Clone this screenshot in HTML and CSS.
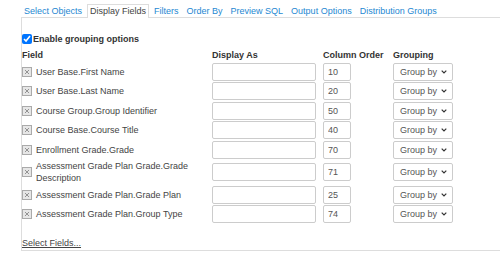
FILE: index.html
```html
<!DOCTYPE html>
<html>
  <head>
    <title>Display Fields</title>
    <link rel="stylesheet" href="styles.css">
  </head>
  <body>
    <div class="tabs">
      <a class="tab">Select Objects</a>
      <a class="tab active">Display Fields</a>
      <a class="tab">Filters</a>
      <a class="tab">Order By</a>
      <a class="tab">Preview SQL</a>
      <a class="tab">Output Options</a>
      <a class="tab">Distribution Groups</a>
    </div>

    <div class="panel">
      <label class="grouping-toggle">
        <input type="checkbox" checked />Enable grouping options
      </label>

      <div class="fields">
        <div class="th">Field</div>
        <div class="th">Display As</div>
        <div class="th">Column Order</div>
        <div class="th">Grouping</div>

        <div class="field"><svg class="remove" viewBox="0 0 10 10"><rect x="0.5" y="0.5" width="9" height="9" /><path d="M3 3l4 4M7 3l-4 4" /></svg><span>User Base.First Name</span></div>
        <input class="alias" type="text" />
        <input class="order" type="text" value="10" />
        <div class="select"><span>Group by</span><svg viewBox="0 0 6 4"><path d="M0.7 0.7l2.3 2.3 2.3-2.3" /></svg></div>

        <div class="field"><svg class="remove" viewBox="0 0 10 10"><rect x="0.5" y="0.5" width="9" height="9" /><path d="M3 3l4 4M7 3l-4 4" /></svg><span>User Base.Last Name</span></div>
        <input class="alias" type="text" />
        <input class="order" type="text" value="20" />
        <div class="select"><span>Group by</span><svg viewBox="0 0 6 4"><path d="M0.7 0.7l2.3 2.3 2.3-2.3" /></svg></div>

        <div class="field"><svg class="remove" viewBox="0 0 10 10"><rect x="0.5" y="0.5" width="9" height="9" /><path d="M3 3l4 4M7 3l-4 4" /></svg><span>Course Group.Group Identifier</span></div>
        <input class="alias" type="text" />
        <input class="order" type="text" value="50" />
        <div class="select"><span>Group by</span><svg viewBox="0 0 6 4"><path d="M0.7 0.7l2.3 2.3 2.3-2.3" /></svg></div>

        <div class="field"><svg class="remove" viewBox="0 0 10 10"><rect x="0.5" y="0.5" width="9" height="9" /><path d="M3 3l4 4M7 3l-4 4" /></svg><span>Course Base.Course Title</span></div>
        <input class="alias" type="text" />
        <input class="order" type="text" value="40" />
        <div class="select"><span>Group by</span><svg viewBox="0 0 6 4"><path d="M0.7 0.7l2.3 2.3 2.3-2.3" /></svg></div>

        <div class="field"><svg class="remove" viewBox="0 0 10 10"><rect x="0.5" y="0.5" width="9" height="9" /><path d="M3 3l4 4M7 3l-4 4" /></svg><span>Enrollment Grade.Grade</span></div>
        <input class="alias" type="text" />
        <input class="order" type="text" value="70" />
        <div class="select"><span>Group by</span><svg viewBox="0 0 6 4"><path d="M0.7 0.7l2.3 2.3 2.3-2.3" /></svg></div>

        <div class="field"><svg class="remove" viewBox="0 0 10 10"><rect x="0.5" y="0.5" width="9" height="9" /><path d="M3 3l4 4M7 3l-4 4" /></svg><span>Assessment Grade Plan Grade.Grade Description</span></div>
        <input class="alias" type="text" />
        <input class="order" type="text" value="71" />
        <div class="select"><span>Group by</span><svg viewBox="0 0 6 4"><path d="M0.7 0.7l2.3 2.3 2.3-2.3" /></svg></div>

        <div class="field"><svg class="remove" viewBox="0 0 10 10"><rect x="0.5" y="0.5" width="9" height="9" /><path d="M3 3l4 4M7 3l-4 4" /></svg><span>Assessment Grade Plan.Grade Plan</span></div>
        <input class="alias" type="text" />
        <input class="order" type="text" value="25" />
        <div class="select"><span>Group by</span><svg viewBox="0 0 6 4"><path d="M0.7 0.7l2.3 2.3 2.3-2.3" /></svg></div>

        <div class="field"><svg class="remove" viewBox="0 0 10 10"><rect x="0.5" y="0.5" width="9" height="9" /><path d="M3 3l4 4M7 3l-4 4" /></svg><span>Assessment Grade Plan.Group Type</span></div>
        <input class="alias" type="text" />
        <input class="order" type="text" value="74" />
        <div class="select"><span>Group by</span><svg viewBox="0 0 6 4"><path d="M0.7 0.7l2.3 2.3 2.3-2.3" /></svg></div>
      </div>

      <a class="select-fields">Select Fields...</a>
    </div>
  </body>
</html>
```

FILE: styles.css
```css
body {
  margin: 0;
  font-family: "Liberation Sans", Arial, sans-serif;
  font-size: 9px;
  color: #444;
  background-color: #fff;
}

.tabs {
  display: flex;
  gap: 2px;
  margin-left: 21px;
  padding-top: 4px;
  border-bottom: 1px solid #ddd;
}

.tab {
  padding: 0 2px;
  line-height: 12px;
  border: 1px solid transparent;
  border-bottom: none;
  color: #1e88d2;
  cursor: pointer;
}

.tab.active {
  color: #444;
  border-color: #ddd;
  background-color: #fff;
  margin-bottom: -1px;
  padding-bottom: 1px;
}

.panel {
  margin-left: 21px;
  padding-top: 15px;
  padding-bottom: 1px;
  border-left: 1px solid #ddd;
  border-bottom: 1px solid #ddd;
}

.grouping-toggle {
  display: flex;
  align-items: center;
  line-height: 12px;
  font-weight: bold;
  color: #333;
}

.grouping-toggle input {
  width: 10px;
  height: 10px;
  margin: 0 1px 0 0;
}

.fields {
  display: grid;
  grid-template-columns: 190px 111px 70px 1fr;
  row-gap: 1.5px;
  align-items: center;
  margin-top: 4px;
}

.th {
  font-weight: bold;
  color: #333;
  line-height: 12px;
}

.field {
  display: flex;
  align-items: center;
  gap: 4px;
  line-height: 12px;
  padding-right: 14px;
}

.remove {
  flex: none;
  width: 10px;
  height: 10px;
}

.remove rect {
  fill: #e6e6e6;
  stroke: #aaa;
}

.remove path {
  stroke: #888;
  stroke-width: 0.9;
}

input[type="text"] {
  box-sizing: border-box;
  height: 18px;
  margin: 0;
  padding: 0 4px;
  border: 1px solid #ccc;
  border-radius: 2px;
  font-family: inherit;
  font-size: 9px;
  color: #555;
}

.alias {
  width: 104px;
}

.order {
  width: 28px;
}

.select {
  box-sizing: border-box;
  display: flex;
  align-items: center;
  justify-content: space-between;
  width: 60px;
  height: 18px;
  padding: 0 5px 0 6px;
  border: 1px solid #ccc;
  border-radius: 2px;
  color: #555;
}

.select svg {
  width: 6px;
  height: 4px;
}

.select path {
  fill: none;
  stroke: #333;
  stroke-width: 1.2;
}

.select-fields {
  display: block;
  margin-top: 13.5px;
  line-height: 12px;
  color: #444;
  text-decoration: underline;
  cursor: pointer;
}
```
